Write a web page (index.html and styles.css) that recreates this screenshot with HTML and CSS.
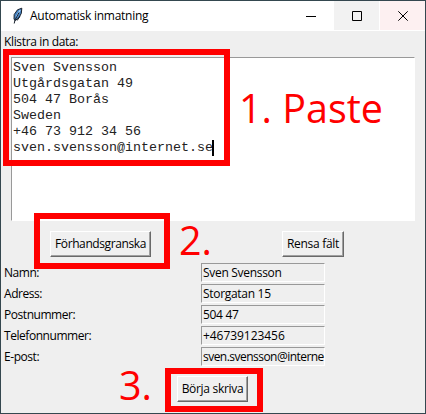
FILE: index.html
```html
<!DOCTYPE html>
<html lang="sv">
<head>
<meta charset="utf-8">
<title>Automatisk inmatning</title>
<link rel="stylesheet" href="styles.css">
</head>
<body>
<main class="window">
  <header class="titlebar">
    <svg class="feather" width="12" height="18" viewBox="0 0 12 18">
      <path d="M2 12 2.2 7.5 5.5 2.8 9.8 1.2 9.3 6.3 6.8 11 3 13.5Z" fill="#4784c4" stroke="#18202b" stroke-width="1"/>
      <path d="M8.2 3 4.2 10" stroke="#a9d2f5" stroke-width="1.3"/>
      <path d="M7 5.5 3 13 2.2 16.5M5.2 13.5 8 9" fill="none" stroke="#18202b" stroke-width="1"/>
    </svg>
    <h1 class="title">Automatisk inmatning</h1>
    <div class="controls">
      <span class="control"><svg width="10" height="10"><path d="M0 5.5H10" stroke="#000"/></svg></span>
      <span class="control maximize"><svg width="10" height="10"><path d="M.5.5H9.5V9.5H.5Z" fill="none" stroke="#000"/></svg></span>
      <span class="control close"><svg width="10" height="10"><path d="M.3.3 9.7 9.7M9.7.3.3 9.7" stroke="#000"/></svg></span>
    </div>
  </header>
  <p class="prompt">Klistra in data:</p>
  <div class="paste-area">Sven Svensson
Utgårdsgatan 49
504 47 Borås
Sweden
+46 73 912 34 56
sven.svensson@internet.se<span class="caret"></span></div>
  <div class="actions">
    <button class="button preview">Förhandsgranska</button>
    <button class="button clear">Rensa fält</button>
  </div>
  <div class="fields">
    <span class="label">Namn:</span><span class="entry">Sven Svensson</span>
    <span class="label">Adress:</span><span class="entry">Storgatan 15</span>
    <span class="label">Postnummer:</span><span class="entry">504 47</span>
    <span class="label">Telefonnummer:</span><span class="entry phone">+46739123456</span>
    <span class="label">E-post:</span><span class="entry email">sven.svensson@interne</span>
  </div>
  <div class="submit"><button class="button start">Börja skriva</button></div>
</main>
<div class="mark mark-paste"></div>
<div class="mark mark-preview"></div>
<div class="mark mark-start"></div>
<span class="note note-paste">1. Paste</span>
<span class="note note-preview">2.</span>
<span class="note note-start">3.</span>
</body>
</html>
```
FILE: styles.css
```css
* { box-sizing: border-box; }

body {
  margin: 0;
  width: 426px;
  height: 414px;
  overflow: hidden;
  position: relative;
  font: 12px/16px "Open Sans", "Noto Sans", sans-serif;
  letter-spacing: -0.3px;
  color: #000;
}

.window {
  width: 426px;
  height: 414px;
  border: 1px solid #34474f;
  background: #efefef;
}

.titlebar {
  display: flex;
  height: 30px;
  background: #fff;
}

.feather { margin: 6px 0 0 11px; }

.title {
  margin: 7px 0 0 6px;
  font-size: 12px;
  font-weight: 400;
  line-height: 16px;
  letter-spacing: -0.25px;
}

.controls {
  display: flex;
  gap: 1px;
  height: 29px;
  margin-left: auto;
}

.control {
  display: flex;
  align-items: center;
  justify-content: center;
  width: 45px;
}

.maximize { background: #f2f2f2; }
.close { background: #fdf0f1; }

.prompt {
  height: 26px;
  margin: 0;
  padding: 3px 3px 0;
  letter-spacing: -0.35px;
}

.paste-area {
  width: 404px;
  height: 164px;
  margin-left: 10px;
  padding: 2px 1px;
  border: 1px solid #fff;
  border-top-color: #999;
  border-left-color: #999;
  background: #fff;
  color: #222;
  font: 13.33px/16px "Liberation Mono", monospace;
  letter-spacing: 0;
  white-space: pre;
}

.caret {
  display: inline-block;
  width: 2px;
  height: 16px;
  margin-left: -1px;
  background: #000;
  vertical-align: top;
}

.actions {
  display: flex;
  height: 41px;
  padding: 10px 0 0 49px;
  gap: 131px;
}

.button {
  height: 26px;
  padding: 0;
  border: 1px solid;
  border-color: #fff #696969 #696969 #fff;
  background: #f0f0f0;
  box-shadow: inset -1px -1px #a0a0a0;
  color: #000;
  font: inherit;
  letter-spacing: inherit;
  white-space: nowrap;
}

.preview {
  width: 101px;
  letter-spacing: -0.4px;
}

.clear { width: 62px; }
.start { width: 71px; }

.fields {
  display: grid;
  grid-template-columns: 197px 124px;
  grid-auto-rows: 21px;
  padding-left: 3px;
}

.label {
  padding-top: 3px;
  letter-spacing: -0.45px;
}

.entry {
  height: 19px;
  margin-top: 1px;
  padding: 1px 0 0 1px;
  border: 1px solid #fff;
  border-top-color: #999;
  border-left-color: #999;
  white-space: nowrap;
}

.phone { letter-spacing: -0.05px; }
.email { letter-spacing: -0.53px; }

.submit { padding: 9px 0 0 176px; }

.mark {
  position: absolute;
  border: 6px solid #f00;
}

.mark-paste { left: 3px; top: 49px; width: 227px; height: 117px; }
.mark-preview { left: 34px; top: 213px; width: 136px; height: 56px; }
.mark-start { left: 165px; top: 368px; width: 98px; height: 44px; }

.note {
  position: absolute;
  color: #f00;
  font-size: 39.5px;
  line-height: 54px;
  letter-spacing: 0;
  white-space: nowrap;
}

.note-paste { left: 239px; top: 81px; }
.note-preview { left: 179px; top: 213px; }
.note-start { left: 119px; top: 358px; }
```
